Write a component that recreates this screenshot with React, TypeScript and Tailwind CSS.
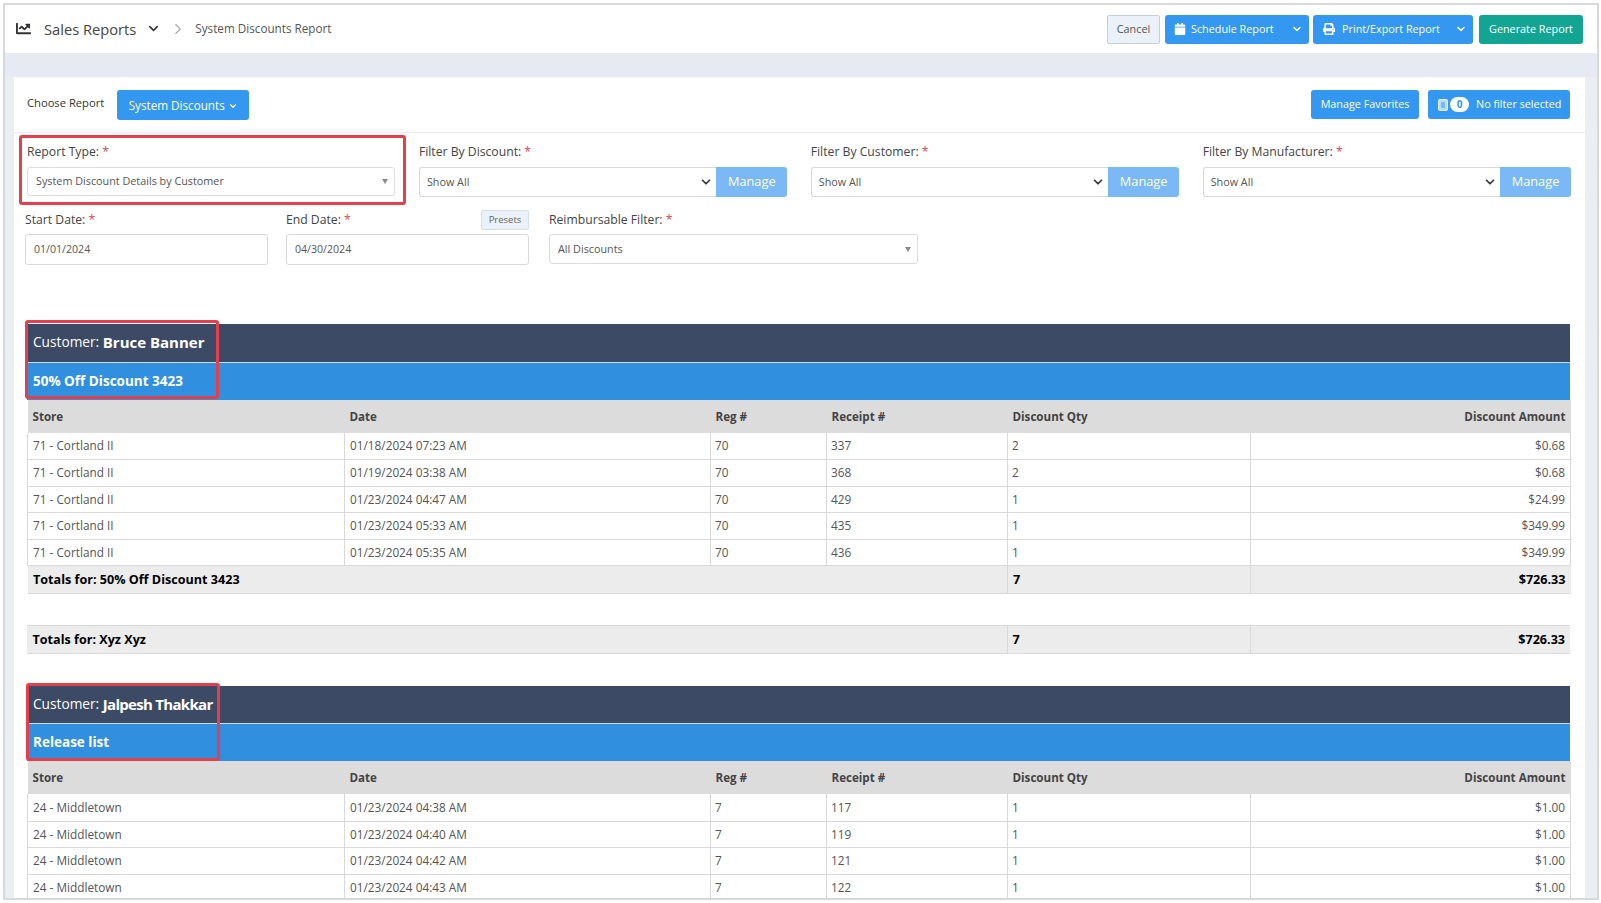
import React from 'react';
import { ChevronDown, ChevronRight } from 'lucide-react';
import { FaCalendar, FaChartLine, FaPrint } from 'react-icons/fa';

type Row = { store: string; date: string; reg: string; receipt: string; qty: string; amount: string };

const bruceRows: Row[] = [
  { store: '71 - Cortland II', date: '01/18/2024 07:23 AM', reg: '70', receipt: '337', qty: '2', amount: '$0.68' },
  { store: '71 - Cortland II', date: '01/19/2024 03:38 AM', reg: '70', receipt: '368', qty: '2', amount: '$0.68' },
  { store: '71 - Cortland II', date: '01/23/2024 04:47 AM', reg: '70', receipt: '429', qty: '1', amount: '$24.99' },
  { store: '71 - Cortland II', date: '01/23/2024 05:33 AM', reg: '70', receipt: '435', qty: '1', amount: '$349.99' },
  { store: '71 - Cortland II', date: '01/23/2024 05:35 AM', reg: '70', receipt: '436', qty: '1', amount: '$349.99' },
];

const jalpeshRows: Row[] = [
  { store: '24 - Middletown', date: '01/23/2024 04:38 AM', reg: '7', receipt: '117', qty: '1', amount: '$1.00' },
  { store: '24 - Middletown', date: '01/23/2024 04:40 AM', reg: '7', receipt: '119', qty: '1', amount: '$1.00' },
  { store: '24 - Middletown', date: '01/23/2024 04:42 AM', reg: '7', receipt: '121', qty: '1', amount: '$1.00' },
  { store: '24 - Middletown', date: '01/23/2024 04:43 AM', reg: '7', receipt: '122', qty: '1', amount: '$1.00' },
];

const Required = () => <span className="text-[#d9475a]"> *</span>;

const Caret = () => (
  <span className="h-0 w-0 border-x-[3px] border-t-[5px] border-x-transparent border-t-[#8a8a8a]" />
);

const ManagedSelect: React.FC<{ label: string }> = ({ label }) => (
  <div>
    <div className="mb-[6px] text-[12.2px] leading-[18px] text-[#444]">
      {label}:<Required />
    </div>
    <div className="flex h-[30px]">
      <div className="flex flex-1 items-center justify-between rounded-l-[3px] border border-r-0 border-[#d9d9d9] pl-[7px] pr-[3px] text-[10.8px] text-[#555]">
        Show All
        <ChevronDown size={14} strokeWidth={3} className="text-[#333]" />
      </div>
      <button className="w-[71px] rounded-r-[3px] bg-[#7ab9f5] text-[12.8px] text-white">Manage</button>
    </div>
  </div>
);

const HeaderCell: React.FC<{ children: React.ReactNode; right?: boolean }> = ({ children, right }) => (
  <th className={`px-[5px] text-[11.6px] font-bold text-[#444] ${right ? 'text-right' : 'text-left'}`}>{children}</th>
);

const cols = (
  <colgroup>
    <col className="w-[317px]" />
    <col className="w-[366px]" />
    <col className="w-[116px]" />
    <col className="w-[181px]" />
    <col className="w-[243px]" />
    <col className="w-[320px]" />
  </colgroup>
);

const TotalsRow: React.FC<{ label: string; qty: string; amount: string }> = ({ label, qty, amount }) => (
  <tr className="h-[28px] border-y border-[#d9d9d9] bg-[#ececec] text-[12.6px] font-bold text-black">
    <td colSpan={4} className="px-[5.5px]">{label}</td>
    <td className="border-l border-[#d9d9d9] px-[5px]">{qty}</td>
    <td className="border-l border-[#d9d9d9] px-[5px] text-right">{amount}</td>
  </tr>
);

const CustomerHead: React.FC<{ name: string; discount: string; darkClass: string; nameClass?: string; boxClass: string }> = ({
  name,
  discount,
  darkClass,
  nameClass,
  boxClass,
}) => (
  <div className="relative">
    <div className={`flex items-center border-b border-[#c9dcf0] bg-[#3c4a66] pb-[2px] pl-[6px] text-[13.7px] text-white ${darkClass}`}>
      Customer:&nbsp;<span className={`text-[15px] font-bold ${nameClass ?? ''}`}>{name}</span>
    </div>
    <div className="flex h-[37px] items-center bg-[#318fe0] pb-[1px] pl-[6px] text-[13.5px] font-bold text-white">{discount}</div>
    <div className={`absolute rounded-[3px] border-[3px] border-[#e4404b] ${boxClass}`} />
  </div>
);

const DetailTable: React.FC<{ rows: Row[]; children?: React.ReactNode }> = ({ rows, children }) => (
  <table className="w-[1543px] table-fixed border-collapse">
    {cols}
    <thead>
      <tr className="h-[33px] bg-[#dcdcdc]">
        <HeaderCell>Store</HeaderCell>
        <HeaderCell>Date</HeaderCell>
        <HeaderCell>Reg #</HeaderCell>
        <HeaderCell>Receipt #</HeaderCell>
        <HeaderCell>Discount Qty</HeaderCell>
        <HeaderCell right>Discount Amount</HeaderCell>
      </tr>
    </thead>
    <tbody>
      {rows.map((r) => (
        <tr key={r.receipt} className="h-[26.6px] border-b border-[#d9d9d9] text-[11.8px] text-[#555]">
          <td className="border-l border-[#d9d9d9] px-[5px]">{r.store}</td>
          <td className="border-l border-[#d9d9d9] px-[5px]">{r.date}</td>
          <td className="border-l border-[#d9d9d9] px-[4px]">{r.reg}</td>
          <td className="border-l border-[#d9d9d9] px-[4px]">{r.receipt}</td>
          <td className="border-l border-[#d9d9d9] px-[4px]">{r.qty}</td>
          <td className="border-x border-[#d9d9d9] px-[5px] text-right">{r.amount}</td>
        </tr>
      ))}
      {children}
    </tbody>
  </table>
);

export default function App() {
  return (
    <div className="h-[903px] w-[1601px] overflow-hidden bg-white pl-[3px] pt-[3px] font-['Open_Sans',sans-serif]">
      <div className="flex h-[897px] w-[1596px] flex-col overflow-hidden border-2 border-[#d8d9dd] bg-[#eceef6]">
        {/* top bar */}
        <div className="flex h-[48px] shrink-0 items-center justify-between bg-white pl-[11px] pr-[14px]">
          <div className="flex items-center">
            <FaChartLine size={15} className="text-[#333]" />
            <span className="ml-[13px] text-[14.7px] text-[#444]">Sales Reports</span>
            <ChevronDown size={15} strokeWidth={2.5} className="ml-[10px] text-[#333]" />
            <ChevronRight size={18} strokeWidth={1.5} className="ml-[8px] text-[#aaa]" />
            <span className="ml-[8px] text-[11.7px] text-[#555]">System Discounts Report</span>
          </div>
          <div className="flex h-[29px] items-stretch whitespace-nowrap text-[10.8px] text-white">
            <button className="w-[53px] rounded-[2px] border border-[#c5d0da] bg-[#eaf1f8] text-[#555]">Cancel</button>
            <button className="ml-[5px] flex w-[144px] items-center rounded-[3px] bg-[#3497f0] pl-[9px] pr-[6px]">
              <FaCalendar size={12} />
              <span className="ml-[5px]">Schedule Report</span>
              <ChevronDown size={12} strokeWidth={3} className="ml-auto" />
            </button>
            <button className="ml-[4px] flex w-[160px] items-center rounded-[3px] bg-[#3497f0] pl-[10px] pr-[6px]">
              <FaPrint size={12} />
              <span className="ml-[7px]">Print/Export Report</span>
              <ChevronDown size={12} strokeWidth={3} className="ml-auto" />
            </button>
            <button className="ml-[6px] w-[104px] rounded-[3px] bg-[#13a594]">Generate Report</button>
          </div>
        </div>
        <div className="h-[24px] shrink-0 bg-[#e8eaf3]" />

        {/* report card */}
        <div className="ml-[9px] w-[1571px] flex-1 bg-white">
          <div className="flex h-[56px] items-start justify-between border-b border-[#ececec] pl-[13px] pr-[15px] pt-[13px]">
            <div className="flex items-start">
              <span className="mt-[3px] text-[11.2px] leading-[20px] text-[#333]">Choose Report</span>
              <button className="ml-[13px] flex h-[30px] w-[132px] items-center justify-center gap-[3px] rounded-[3px] bg-[#3497f0] pt-[1px] text-[11.7px] text-white">
                System Discounts
                <ChevronDown size={10} strokeWidth={3} />
              </button>
            </div>
            <div className="flex whitespace-nowrap text-[10.8px] text-white">
              <button className="h-[29px] w-[108px] rounded-[3px] bg-[#3497f0]">Manage Favorites</button>
              <button className="ml-[9px] flex h-[29px] w-[142px] items-center rounded-[3px] bg-[#3497f0] pl-[10px]">
                <svg width="10" height="12" viewBox="0 0 10 12">
                  <rect x="0.5" y="0.5" width="9" height="11" rx="1" fill="#bcdcf8" stroke="#e6f2fd" />
                  <rect x="3" y="3" width="4" height="6" fill="#7ab9f5" />
                </svg>
                <span className="ml-[2px] flex h-[15px] w-[19px] items-center justify-center rounded-full bg-white text-[10px] font-bold text-[#3497f0]">0</span>
                <span className="ml-[7px]">No filter selected</span>
              </button>
            </div>
          </div>

          <div className="ml-[13px] grid w-[1544px] grid-cols-4 gap-x-[23.5px] pt-[10px]">
            <div className="relative">
              <div className="mb-[6px] text-[12.2px] leading-[18px] text-[#444]">
                Report Type:<Required />
              </div>
              <div className="flex h-[29px] items-center justify-between rounded-[3px] border border-[#dcdcdc] pl-[8px] pr-[6px] text-[10.8px] text-[#555]">
                System Discount Details by Customer
                <Caret />
              </div>
              <div className="absolute -left-[8px] -top-[8px] h-[70px] w-[387px] rounded-[3px] border-[3px] border-[#e4404b]" />
            </div>
            <ManagedSelect label="Filter By Discount" />
            <ManagedSelect label="Filter By Customer" />
            <ManagedSelect label="Filter By Manufacturer" />
          </div>

          <div className="ml-[11px] mt-[13px] flex">
            <div className="w-[243px]">
              <div className="mb-[4px] flex h-[20px] items-center text-[12.2px] text-[#444]">
                <span>Start Date:<Required /></span>
              </div>
              <div className="flex h-[31px] items-center rounded-[3px] border border-[#d9d9d9] pl-[8px] text-[10.6px] text-[#555]">01/01/2024</div>
            </div>
            <div className="ml-[18px] w-[243px]">
              <div className="mb-[4px] flex h-[20px] items-center justify-between text-[12.2px] text-[#444]">
                <span>End Date:<Required /></span>
                <button className="h-[20px] w-[48px] rounded-[2px] border border-[#d5e0ea] bg-[#eaf1f8] text-[9.5px] text-[#666]">Presets</button>
              </div>
              <div className="flex h-[31px] items-center rounded-[3px] border border-[#d9d9d9] pl-[8px] text-[10.6px] text-[#555]">04/30/2024</div>
            </div>
            <div className="ml-[20px] w-[369px]">
              <div className="mb-[4px] flex h-[20px] items-center text-[12.2px] text-[#444]">
                <span>Reimbursable Filter:<Required /></span>
              </div>
              <div className="flex h-[30px] items-center justify-between rounded-[3px] border border-[#dcdcdc] pl-[8px] pr-[6px] text-[10.8px] text-[#555]">
                All Discounts
                <Caret />
              </div>
            </div>
          </div>

          <div className="ml-[13px] mt-[59px] w-[1543px]">
            <CustomerHead name="Bruce Banner" discount="50% Off Discount 3423" darkClass="h-[39px]" boxClass="-left-[2px] -top-[4px] h-[79px] w-[194px]" />
            <DetailTable rows={bruceRows}>
              <TotalsRow label="Totals for: 50% Off Discount 3423" qty="7" amount="$726.33" />
            </DetailTable>
            <table className="mt-[31px] w-[1543px] table-fixed border-collapse">
              {cols}
              <tbody>
                <TotalsRow label="Totals for: Xyz Xyz" qty="7" amount="$726.33" />
              </tbody>
            </table>
            <div className="mt-[32px]">
              <CustomerHead
                name="Jalpesh Thakkar"
                discount="Release list"
                darkClass="h-[38px]"
                nameClass="tracking-[-0.7px]"
                boxClass="-left-[1px] -top-[3px] h-[78px] w-[194px]"
              />
              <DetailTable rows={jalpeshRows} />
            </div>
          </div>
        </div>
      </div>
    </div>
  );
}
